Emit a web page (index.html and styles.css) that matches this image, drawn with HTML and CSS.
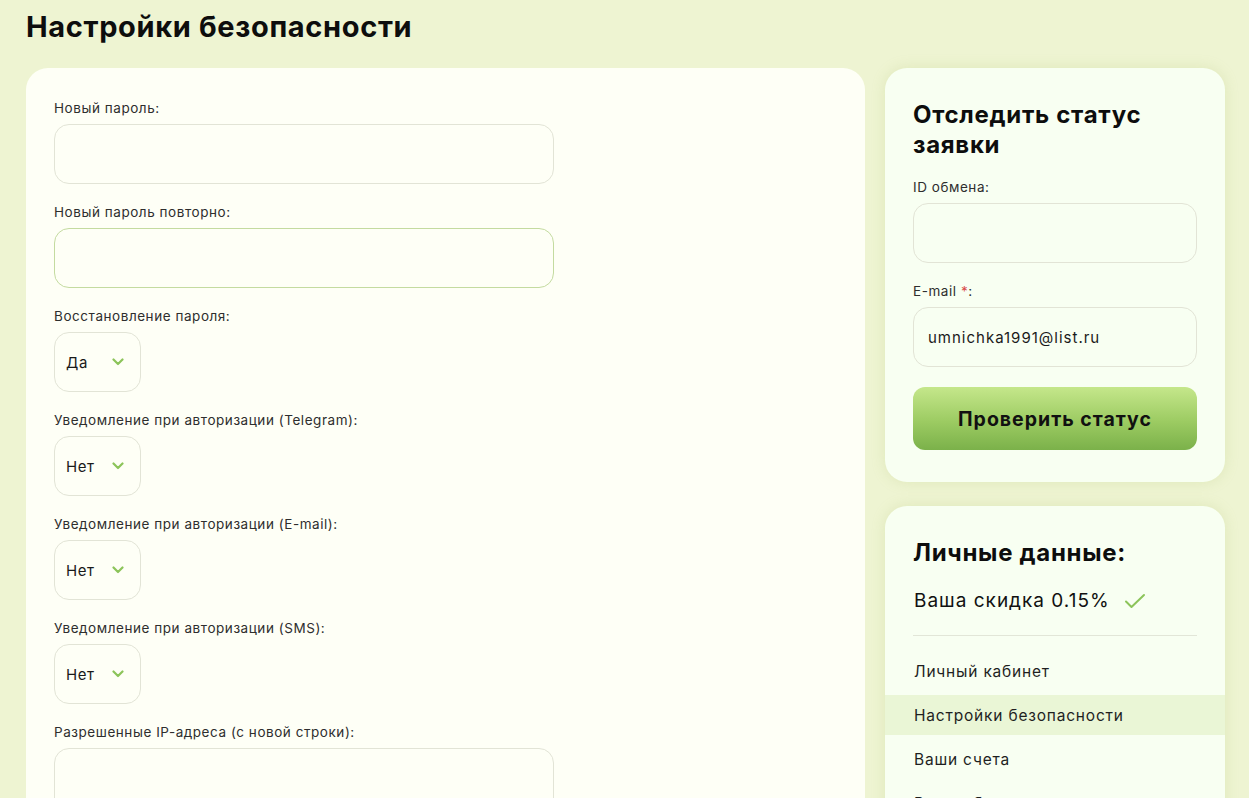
FILE: index.html
```html
<!DOCTYPE html>
<html lang="ru">
<head>
<meta charset="utf-8">
<title>Настройки безопасности</title>
<link rel="stylesheet" href="styles.css">
</head>
<body>
<div class="page">
  <h1 class="page-title">Настройки безопасности</h1>
  <div class="layout">
    <main class="card main-card">
      <div class="field">
        <label class="label">Новый пароль:</label>
        <div class="input wide"></div>
      </div>
      <div class="field">
        <label class="label">Новый пароль повторно:</label>
        <div class="input wide focused"></div>
      </div>
      <div class="field">
        <label class="label">Восстановление пароля:</label>
        <div class="select"><span>Да</span><svg class="chev" width="12" height="8" viewBox="0 0 12 8"><path d="M1.5 1.5 L6 6 L10.5 1.5" fill="none" stroke="#8cc45a" stroke-width="2.2" stroke-linecap="round" stroke-linejoin="round"/></svg></div>
      </div>
      <div class="field">
        <label class="label">Уведомление при авторизации (Telegram):</label>
        <div class="select"><span>Нет</span><svg class="chev" width="12" height="8" viewBox="0 0 12 8"><path d="M1.5 1.5 L6 6 L10.5 1.5" fill="none" stroke="#8cc45a" stroke-width="2.2" stroke-linecap="round" stroke-linejoin="round"/></svg></div>
      </div>
      <div class="field">
        <label class="label">Уведомление при авторизации (E-mail):</label>
        <div class="select"><span>Нет</span><svg class="chev" width="12" height="8" viewBox="0 0 12 8"><path d="M1.5 1.5 L6 6 L10.5 1.5" fill="none" stroke="#8cc45a" stroke-width="2.2" stroke-linecap="round" stroke-linejoin="round"/></svg></div>
      </div>
      <div class="field">
        <label class="label">Уведомление при авторизации (SMS):</label>
        <div class="select"><span>Нет</span><svg class="chev" width="12" height="8" viewBox="0 0 12 8"><path d="M1.5 1.5 L6 6 L10.5 1.5" fill="none" stroke="#8cc45a" stroke-width="2.2" stroke-linecap="round" stroke-linejoin="round"/></svg></div>
      </div>
      <div class="field">
        <label class="label">Разрешенные IP-адреса (с новой строки):</label>
        <div class="input wide tall"></div>
      </div>
    </main>
    <aside class="sidebar">
      <section class="card side-card track">
        <h2 class="side-title">Отследить статус заявки</h2>
        <div class="field">
          <label class="label">ID обмена:</label>
          <div class="input"></div>
        </div>
        <div class="field">
          <label class="label">E-mail <span class="req">*</span>:</label>
          <div class="input filled">umnichka1991@list.ru</div>
        </div>
        <button class="btn">Проверить статус</button>
      </section>
      <section class="card side-card personal">
        <h2 class="side-title">Личные данные:</h2>
        <div class="discount">Ваша скидка 0.15% <svg width="22" height="16" viewBox="0 0 22 16"><path d="M2 8.5 L7.5 14 L20 2" fill="none" stroke="#8cc45a" stroke-width="2" stroke-linecap="round" stroke-linejoin="round"/></svg></div>
        <div class="divider"></div>
        <nav class="menu">
          <a class="menu-item">Личный кабинет</a>
          <a class="menu-item active">Настройки безопасности</a>
          <a class="menu-item">Ваши счета</a>
          <a class="menu-item">Ваши обмены</a>
        </nav>
      </section>
    </aside>
  </div>
</div>
</body>
</html>
```

FILE: styles.css
```css
* { box-sizing: border-box; }
html, body { margin: 0; padding: 0; }
body {
  background: #eef4d2;
  font-family: "Inter", "Liberation Sans", sans-serif;
  color: #1a1a1a;
  height: 798px;
  overflow: hidden;
}
.page { padding: 0 24px 0 26px; }
.page-title {
  margin: 0;
  padding-top: 10px;
  height: 68px;
  font-size: 29px;
  line-height: 34px;
  font-weight: 700;
  color: #0d0d0d;
  letter-spacing: 0.65px;
}
.layout {
  display: grid;
  grid-template-columns: 839px 340px;
  gap: 20px;
  align-items: start;
}
.card {
  border-radius: 22px;
}
.main-card {
  background: #fefff6;
  padding: 32px 28px 40px;
  min-height: 800px;
}
.field { margin-bottom: 20px; }
.label {
  display: block;
  font-size: 13.5px;
  line-height: 16px;
  color: #2e2e2e;
  margin-bottom: 8px;
  letter-spacing: 0.55px;
}
.input {
  height: 60px;
  border: 1px solid #e2e4d6;
  border-radius: 15px;
}
.input.wide { width: 500px; }
.input.focused { border-color: #c4dba0; }
.input.tall { height: 120px; }
.select {
  width: 87px;
  height: 60px;
  border: 1px solid #e2e4d6;
  border-radius: 15px;
  display: flex;
  align-items: center;
  padding: 0 0 0 11px;
  font-size: 15px;
  letter-spacing: 0.6px;
  color: #1a1a1a;
}
.select span { width: 46px; }
.sidebar {
  display: flex;
  flex-direction: column;
  gap: 24px;
}
.side-card {
  background: #f8fff2;
  box-shadow: 0 0 14px rgba(170, 190, 100, 0.22);
  padding: 32px 28px 32px;
}
.side-title {
  margin: 0 0 19px;
  font-size: 24px;
  line-height: 30px;
  font-weight: 700;
  color: #0d0d0d;
  letter-spacing: 0.7px;
}
.track .input { width: 284px; }
.input.filled {
  display: flex;
  align-items: center;
  padding: 0 14px;
  font-size: 15px;
  letter-spacing: 1px;
  color: #1a1a1a;
}
.req { color: #d94a4a; }
.btn {
  display: block;
  width: 284px;
  height: 63px;
  border: none;
  border-radius: 12px;
  background: linear-gradient(180deg, #c5e78b 0%, #9ccb62 55%, #7bb14a 100%);
  font-family: inherit;
  font-size: 19.5px;
  font-weight: 700;
  letter-spacing: 1px;
  color: #111;
}
.personal { padding: 32px 0 20px; }
.personal .side-title { padding: 0 28px; margin-bottom: 21px; }
.discount {
  padding: 0 28px 0 29px;
  display: flex;
  align-items: center;
  gap: 14px;
  font-size: 19px;
  line-height: 24px;
  letter-spacing: 1px;
  color: #111;
}
.divider {
  margin: 22px 28px 15px;
  height: 1px;
  background: #e2e6d8;
}
.menu { display: flex; flex-direction: column; gap: 4px; }
.menu-item {
  display: flex;
  align-items: center;
  height: 40px;
  padding: 0 28px 0 29px;
  font-size: 15.5px;
  letter-spacing: 0.8px;
  color: #1f1f1f;
}
.menu-item.active { background: #eaf6d6; }
```
